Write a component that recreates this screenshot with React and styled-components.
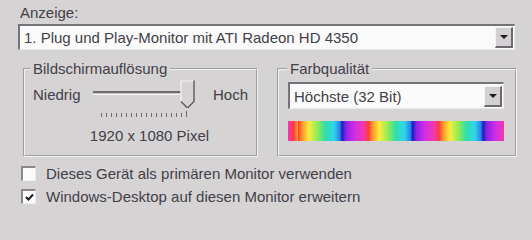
import React from 'react';
import styled, { createGlobalStyle } from 'styled-components';

const GlobalStyle = createGlobalStyle`
  html, body {
    margin: 0;
    padding: 0;
    background: #d6d3d5;
  }
  body {
    font-family: "Liberation Sans", Arial, sans-serif;
    font-size: 15px;
    color: #423f48;
  }
`;

const Page = styled.div`
  width: 532px;
  height: 215px;
  box-sizing: border-box;
  padding: 4px 17px 0 18px;
  overflow: hidden;
`;

const Label = styled.div`
  padding-left: 2px;
  line-height: 17px;
  margin-bottom: 3px;
`;

const Combo = styled.div`
  display: flex;
  align-items: center;
  height: ${p => p.$h}px;
  margin-top: ${p => p.$top || 0}px;
  box-sizing: border-box;
  background: #fbfafb;
  border-top: 2px solid #75727a;
  border-left: 2px solid #75727a;
  border-right: 1px solid #ebe9ea;
  border-bottom: 1px solid #ebe9ea;
  padding: 0 1px 0 4px;
`;

const ComboText = styled.span`
  flex: 1;
  white-space: nowrap;
`;

const DropButton = styled.div`
  width: 18px;
  height: 21px;
  box-sizing: border-box;
  background: #d3d0d2;
  border-top: 1px solid #f4f2f3;
  border-left: 1px solid #f4f2f3;
  border-right: 2px solid #6c6970;
  border-bottom: 2px solid #6c6970;
  display: flex;
  align-items: center;
  justify-content: center;

  &::after {
    content: '';
    border-left: 4px solid transparent;
    border-right: 4px solid transparent;
    border-top: 4px solid #1e1c22;
  }
`;

const Columns = styled.div`
  display: grid;
  grid-template-columns: 235px 240px;
  column-gap: 19px;
  margin: 11px 0 0 5px;
`;

const Group = styled.fieldset`
  margin: 0;
  padding: 0;
  height: 96px;
  box-sizing: border-box;
  border: 2px groove #f3f1f2;
`;

const Legend = styled.legend`
  margin-left: ${p => p.$indent}px;
  padding: 0 3px;
  line-height: 16px;
`;

const GroupBody = styled.div`
  padding: ${p => p.$pad};
`;

const SliderRow = styled.div`
  display: flex;
  align-items: center;
  height: 28px;
  margin-top: 3px;
`;

const SliderEnd = styled.span`
  width: ${p => p.$w}px;
`;

const Slider = styled.div`
  position: relative;
  width: 102px;
  height: 28px;
  margin-right: 18px;
`;

const Track = styled.div`
  position: absolute;
  left: 0;
  right: 12px;
  top: 11px;
  height: 4px;
  box-sizing: border-box;
  border-top: 2px solid #6e6b73;
  border-bottom: 1px solid #f4f2f3;
  background: #c9c6c9;
`;

const Thumb = styled.svg`
  position: absolute;
  right: 0;
  top: 0;
`;

const Ticks = styled.div`
  display: flex;
  gap: 4px;
  align-items: flex-end;
  height: 6px;
  margin: 3px 0 0 68px;
`;

const Tick = styled.span`
  width: 1px;
  height: ${p => (p.$long ? 6 : 4)}px;
  background: #6c6970;
`;

const Resolution = styled.div`
  text-align: center;
  padding-left: 10px;
  margin-top: 10px;
  line-height: 17px;
`;

const ColorBar = styled.div`
  height: 20px;
  margin-top: 12px;
  background-image: repeating-linear-gradient(
    90deg,
    #ff3a3e 0px,
    #ff9526 4px,
    #f7ee3d 11px,
    #8aeb5a 20px,
    #33dfa8 27px,
    #2fd5ee 36px,
    #2a7fe8 42px,
    #1a1fbf 44px,
    #8e22e6 48px,
    #d52ee6 57px,
    #f03aa8 66px,
    #ff3a3e 70.5px
  );
  background-position: 10px 0;
`;

const Checks = styled.div`
  margin-top: 5px;
`;

const CheckRow = styled.label`
  display: flex;
  align-items: center;
  height: 23px;
  padding-left: 3px;
  gap: 10px;
  white-space: nowrap;
`;

const CheckBox = styled.span`
  width: 15px;
  height: 15px;
  box-sizing: border-box;
  background: #fbfafb;
  border-top: 2px solid #8a878e;
  border-left: 2px solid #8a878e;
  border-right: 1px solid #eeecee;
  border-bottom: 1px solid #eeecee;
  display: flex;
  align-items: center;
  justify-content: center;
`;

const App = () => {
  const ticks = Array.from({ length: 18 });

  return (
    <>
      <GlobalStyle />
      <Page>
        <Label>Anzeige:</Label>
        <Combo $h={26}>
          <ComboText>1. Plug und Play-Monitor mit ATI Radeon HD 4350</ComboText>
          <DropButton />
        </Combo>

        <Columns>
          <Group>
            <Legend $indent={5}>Bildschirmauflösung</Legend>
            <GroupBody $pad="0 0 0 8px">
              <SliderRow>
                <SliderEnd $w={60}>Niedrig</SliderEnd>
                <Slider>
                  <Track />
                  <Thumb width="15" height="28" viewBox="0 0 15 28">
                    <path d="M1 1 H13 V21 L7 27 L1 21 Z" fill="#d6d3d5" />
                    <path d="M1 21 V1 H13" fill="none" stroke="#f6f4f5" strokeWidth="1.2" />
                    <path d="M14 0.5 V21.5 L7.5 28 L1 21.5" fill="none" stroke="#5c5960" strokeWidth="1.4" />
                  </Thumb>
                </Slider>
                <SliderEnd>Hoch</SliderEnd>
              </SliderRow>
              <Ticks>
                {ticks.map((_, i) => (
                  <Tick key={i} $long={i === ticks.length - 1} />
                ))}
              </Ticks>
              <Resolution>1920 x 1080 Pixel</Resolution>
            </GroupBody>
          </Group>

          <Group>
            <Legend $indent={8}>Farbqualität</Legend>
            <GroupBody $pad="0 11px 0 9px">
              <Combo $h={27} $top={5}>
                <ComboText>Höchste (32 Bit)</ComboText>
                <DropButton />
              </Combo>
              <ColorBar />
            </GroupBody>
          </Group>
        </Columns>

        <Checks>
          <CheckRow>
            <CheckBox />
            Dieses Gerät als primären Monitor verwenden
          </CheckRow>
          <CheckRow>
            <CheckBox>
              <svg width="9" height="9" viewBox="0 0 9 9">
                <path d="M1 4 L3.5 6.5 L8 1.5" fill="none" stroke="#1e1c22" strokeWidth="2" />
              </svg>
            </CheckBox>
            Windows-Desktop auf diesen Monitor erweitern
          </CheckRow>
        </Checks>
      </Page>
    </>
  );
};

export default App;
